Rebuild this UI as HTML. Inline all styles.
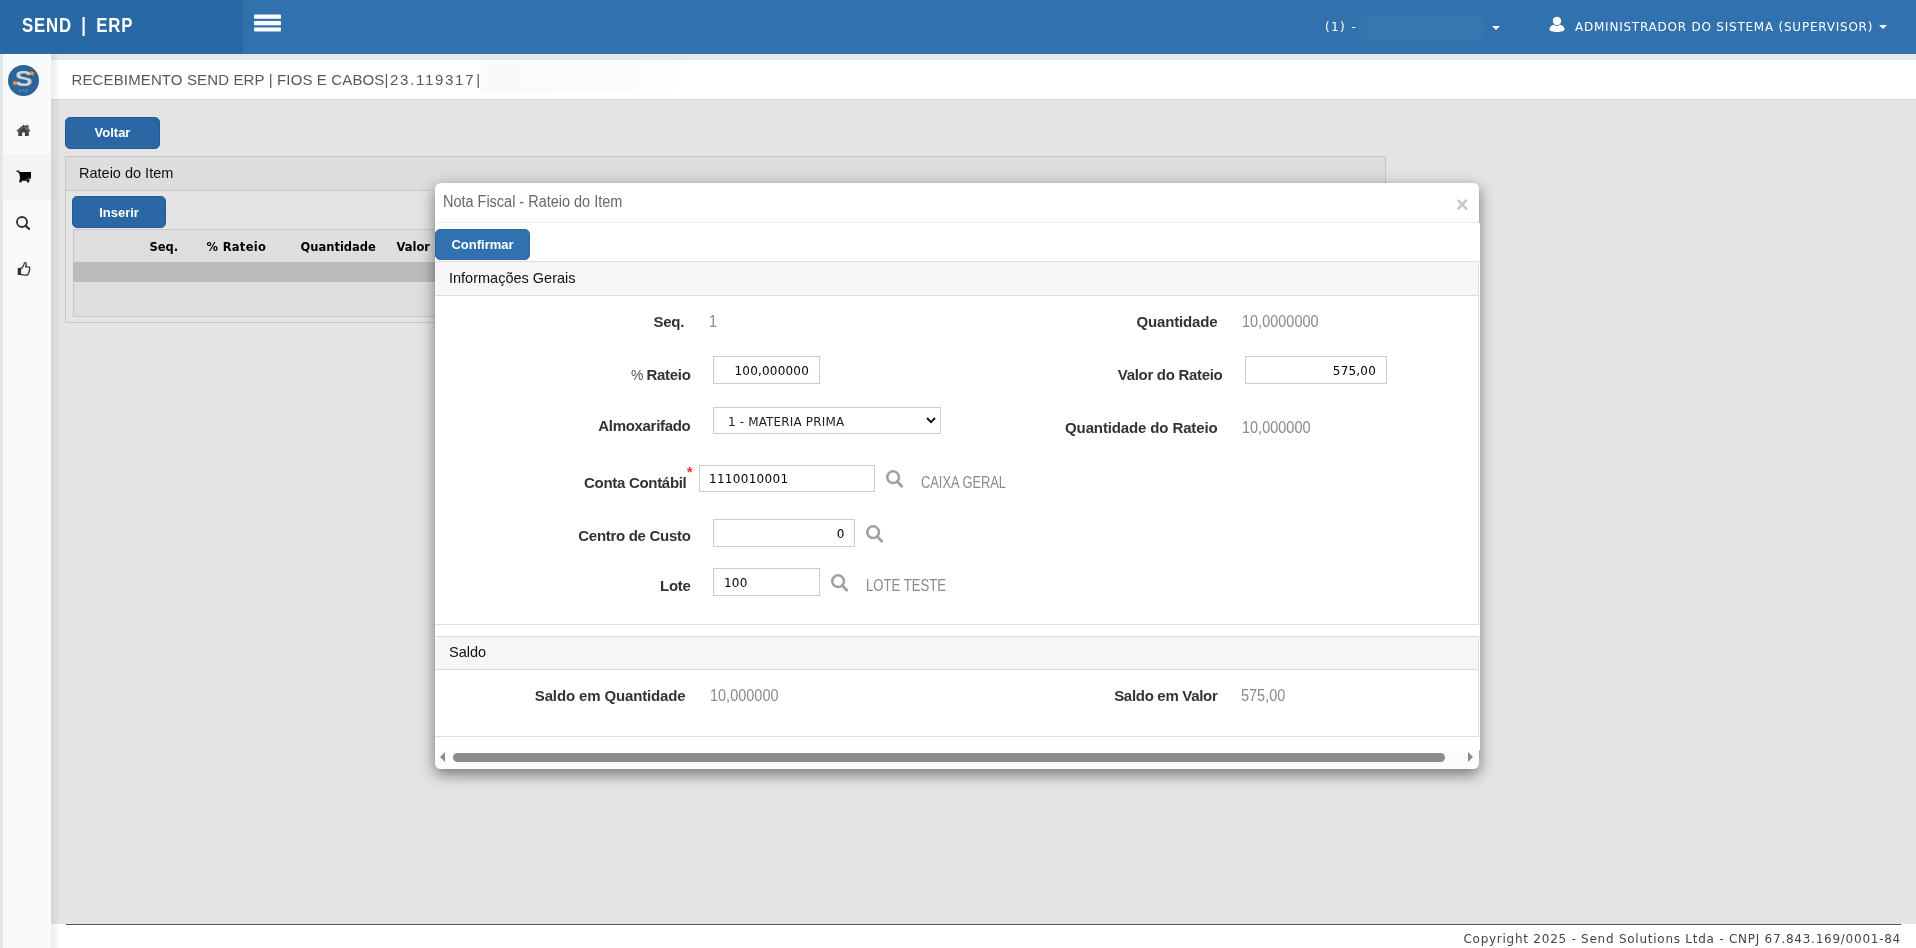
<!DOCTYPE html>
<html lang="pt-BR">
<head>
<meta charset="utf-8">
<title>SEND | ERP</title>
<style>
*{box-sizing:border-box;margin:0;padding:0}
html,body{width:1916px;height:948px;overflow:hidden;background:#fff}
body{position:relative;font-family:"Liberation Sans",Arial,sans-serif;font-size:14.5px;color:#333}
.abs{position:absolute}
.t{position:absolute;white-space:pre;line-height:1}
svg{position:absolute;overflow:visible}
.t,.lbl,.val,.pt,.inp,.th,.btn{filter:grayscale(0)}
/* header */
#hdr{position:absolute;left:0;top:0;width:1916px;height:54px;background:#3071ae}
#logo{position:absolute;left:0;top:0;width:243px;height:54px;background:#2868a5}
#brand{left:22.3px;top:12.5px;font:700 21px "Liberation Sans",Arial,sans-serif;color:#fff;transform:scaleX(.8);transform-origin:0 0;letter-spacing:1px;word-spacing:5px}
.bar{position:absolute;left:254px;width:27px;height:4px;background:#fff;border-radius:1px}
.hd{font:400 12px "DejaVu Sans",Verdana,sans-serif;color:#fff;letter-spacing:.77px}
/* sidebar */
#side{position:absolute;left:0;top:54px;width:51px;height:894px;background:#f9fafc;border-left:3px solid #e6e6e6}
#side .act{position:absolute;left:0;top:100px;width:48px;height:46px;background:#f4f4f4}
#strip{position:absolute;left:51px;top:54px;width:1865px;height:6px;background:#e7e8e9}
#title{position:absolute;left:51px;top:60px;width:1865px;height:40px;background:#fff;border-bottom:1px solid #d8d8d8}
#content{position:absolute;left:51px;top:100px;width:1865px;height:824px;background:#e4e4e4}
#sshadow{position:absolute;left:51px;top:54px;width:9px;height:894px;background:linear-gradient(to right,rgba(0,0,0,.07) 0,rgba(0,0,0,.05) 3px,rgba(0,0,0,0) 9px)}
#footer{position:absolute;left:51px;top:924px;width:1865px;height:24px;background:#fff}
.btn{position:absolute;background:#2a67a4;border:1px solid #245a91;border-radius:5px;color:#fff;font:700 13px "Liberation Sans",Arial,sans-serif;text-align:center;white-space:pre}
.th{position:absolute;white-space:pre;line-height:1;font:700 11.5px "DejaVu Sans",Verdana,sans-serif;color:#000;letter-spacing:0}
.lbl{position:absolute;white-space:pre;line-height:1;font:700 15px "Liberation Sans",Arial,sans-serif;color:#333;text-align:right;letter-spacing:-.3px}
.val{position:absolute;white-space:pre;line-height:1;font:400 15.7px "Liberation Sans",Arial,sans-serif;color:#8a8a8a;transform:scaleX(.924);transform-origin:0 0}
.inp{position:absolute;background:#fff;border:1px solid #ccc;font:400 12px "DejaVu Sans",Verdana,sans-serif;color:#000;white-space:pre;line-height:28.500px;padding:0 10px;letter-spacing:.2px}
.r{text-align:right}
.ph{position:absolute;left:435px;width:1044px;background:#f6f6f6;border:1px solid #ddd;border-left:0}
.pb{position:absolute;left:435px;width:1044px;background:#fff;border:1px solid #ddd;border-top:0;border-left:0}
.pt{position:absolute;white-space:pre;line-height:1;font:400 14.5px "Liberation Sans",Arial,sans-serif;color:#111}
</style>
</head>
<body>
<div id="hdr">
  <div id="logo"></div>
  <div id="brand" class="t">SEND | ERP</div>
  <svg style="left:254px;top:14px" width="27" height="18" viewBox="0 0 27 18"><rect x="0" y=".6" width="27" height="4.100" rx="1" fill="#fff"/><rect x="0" y="7.100" width="27" height="4.100" rx="1" fill="#fff"/><rect x="0" y="13.400" width="27" height="4.100" rx="1" fill="#fff"/></svg>
  <div class="abs" style="left:1360px;top:15px;width:126px;height:26px;background:rgba(255,255,255,.045);border-radius:8px;filter:blur(4px)"></div>
  <div class="t hd" style="left:1325px;top:20px;letter-spacing:1.4px">(1) -</div>
  <div class="abs" style="left:1492px;top:26px;border-left:4px solid transparent;border-right:4px solid transparent;border-top:4px solid #fff"></div>
  <svg style="left:1549px;top:16px" width="16" height="16" viewBox="0 0 16 16"><circle cx="8" cy="5" r="4.2" fill="#fff"/><path d="M0.5 13.5c0-3 2.5-4.5 4.5-4.8c1 .9 2 1.2 3 1.2s2-.3 3-1.2c2 .3 4.500 1.800 4.500 4.800c0 1.500-3 2.500-7.500 2.500s-7.500-1-7.500-2.500z" fill="#fff"/></svg>
  <div class="t hd" style="left:1575px;top:20px">ADMINISTRADOR DO SISTEMA (SUPERVISOR)</div>
  <div class="abs" style="left:1879px;top:25px;border-left:4px solid transparent;border-right:4px solid transparent;border-top:4px solid #fff"></div>
</div>
<div id="side">
  <div class="act"></div>
</div>
<div id="strip"></div>
<div id="title">
  <div class="t" style="left:20.500px;top:11.500px;font-size:15px;letter-spacing:.13px;color:#585858">RECEBIMENTO SEND ERP | FIOS E CABOS|<span style="letter-spacing:1.700px;margin-left:1.600px">23.119317</span><span style="margin-left:1.200px">|</span></div>
  <div class="abs" style="left:430px;top:2px;width:210px;height:31px;background:linear-gradient(to right,#fafafa,#fcfcfc 70%,#fff)"></div>
</div>
<div id="content">
  <div class="btn" style="left:14px;top:17px;width:95px;height:32px;line-height:29px">Voltar</div>
  <div class="abs" style="left:14px;top:56px;width:1321px;height:167px;border:1px solid #c6c6c6">
    <div class="abs" style="left:0;top:0;width:1319px;height:34px;background:#dddddd;border-bottom:1px solid #c6c6c6"></div>
    <div class="pt" style="left:13px;top:8px">Rateio do Item</div>
    <div class="btn" style="left:6px;top:39px;width:94px;height:32px;line-height:31px">Inserir</div>
    <div class="abs" style="left:7px;top:72px;width:1305px;height:33px;background:#dedede;border:1px solid #c8c8c8;border-bottom:0"></div>
    <div class="abs" style="left:7px;top:105px;width:1305px;height:20px;background:#bcbcbc"></div>
    <div class="abs" style="left:7px;top:126px;width:1305px;height:34px;background:#dedede;border:1px solid #c8c8c8;border-top:0"></div>
    <div class="th" style="left:83.500px;top:82.500px">Seq.</div>
    <div class="th" style="left:140.500px;top:82.500px;letter-spacing:.3px">% Rateio</div>
    <div class="th" style="left:234.500px;top:82.500px">Quantidade</div>
    <div class="th" style="left:330.500px;top:82.500px">Valor</div>
  </div>
</div>
<div id="footer">
  <div class="abs" style="left:15px;top:0;width:1835px;height:1px;background:#555"></div>
  <div class="t" style="right:15px;top:8px;font:400 12px 'DejaVu Sans',Verdana,sans-serif;color:#444;letter-spacing:.75px">Copyright 2025 - Send Solutions Ltda - CNPJ 67.843.169/0001-84</div>
</div>
<div id="sshadow"></div>
<!-- sidebar icons -->
<svg style="left:8px;top:65px" width="31" height="31" viewBox="0 0 31 31">
  <circle cx="15.5" cy="15.5" r="15.5" fill="#2b6496"/>
  <text x="15.500" y="21.300" text-anchor="middle" font-family="Liberation Sans,Arial,sans-serif" font-weight="700" font-size="22.500" fill="#cfd1d5" transform="translate(15.500 0) scale(1.180 1) translate(-15.500 0)">S</text>
  <rect x="22" y="6.700" width="4" height="3.500" fill="#f58a3c" transform="rotate(20 24 8.500)"/>
  <rect x="5" y="16.300" width="4" height="3.500" fill="#f58a3c" transform="rotate(20 7 18)"/>
  <text x="15.500" y="27" text-anchor="middle" font-family="Liberation Sans,Arial,sans-serif" font-size="5.500" fill="#6f94b8" letter-spacing=".5">erp</text>
</svg>
<svg id="i-home" style="left:15.500px;top:124.500px" width="15" height="12" viewBox="0 0 16 13"><path d="M8 1.800L2.300 6.600V12h4.200V8.200h3V12h4.200V6.600z" fill="#444"/><path d="M0.800 6.800L8 .8l2.700 2.250V1h2v3.700l2.500 2.100" fill="none" stroke="#444" stroke-width="1.500"/></svg>
<svg id="i-cart" style="left:15.500px;top:170.300px" width="15" height="13.200" viewBox="0 0 16 14"><path d="M0.500 1.200h2.300l.5 1.600H15.300v5.500L4.600 9.600l.3 1h9.600" fill="none" stroke="#000" stroke-width="1.400"/><path d="M3.300 2.800H15.300V8L4.600 9.300z" fill="#000"/><rect x="3.600" y="10.800" width="2.400" height="2.400" fill="#000"/><rect x="11.600" y="10.800" width="2.400" height="2.400" fill="#000"/></svg>
<svg id="i-search" style="left:16px;top:216px" width="15" height="15" viewBox="0 0 15 15"><circle cx="6" cy="6" r="5" fill="none" stroke="#333" stroke-width="1.900"/><path d="M9.600 9.600L13.100 13" stroke="#333" stroke-width="2.200" stroke-linecap="round"/></svg>
<svg id="i-thumb" style="left:16.500px;top:262px" width="14" height="14" viewBox="0 0 14 14"><path d="M3.500 6.200h1.500L7 2.200c.2-1 .4-1.500 1-1.500c.8 0 1.200 .8 1.200 1.800c0 .9-.4 1.700-.6 2.400h3c.8 0 1.300 .6 1.300 1.300c0 .5-.2 .9-.5 1.100c.2 .3 .3 .6 .2 1c-.1 .4-.3 .7-.6 .9c.1 .3 .1 .7 0 1c-.2 .4-.4 .6-.7 .8c.1 1.200-.5 2.100-1.800 2.100H7c-1.200 0-2-.6-3.500-.8z" fill="none" stroke="#333" stroke-width="1.300" stroke-linejoin="round"/><rect x="0.700" y="6" width="3" height="7" fill="#333"/></svg>

<!-- modal -->
<div id="modal" class="abs" style="left:435px;top:183px;width:1044px;height:586px;background:#fff;border-radius:6px;box-shadow:0 5px 15px rgba(0,0,0,.5)"></div>
<div class="abs" style="left:435px;top:222px;width:1044px;height:1px;background:#ececec"></div>
<div class="t" style="left:443px;top:194.3px;font-size:16px;color:#686868;transform:scaleX(.904);transform-origin:0 0">Nota Fiscal - Rateio do Item</div>
<div class="t" style="left:1455.700px;top:192.300px;font:700 22px 'Liberation Sans',Arial,sans-serif;color:#c6c6c6">×</div>
<div class="btn" style="left:435px;top:229px;width:95px;height:31px;line-height:29px;background:#3071ae;border-color:#2c69a3">Confirmar</div>

<div class="ph" style="top:261px;height:35px"></div>
<div class="pb" style="top:296px;height:329px"></div>
<div class="pt" style="left:449px;top:269.500px">Informações Gerais</div>

<div class="lbl" style="right:1232px;top:313px">Seq.</div>
<div class="val" style="left:709px;top:313px">1</div>
<div class="lbl" style="right:1225.5px;top:366px"><span style="font-weight:400;font-size:14px;color:#555;letter-spacing:-.8px">%</span> Rateio</div>
<div class="inp r" style="left:713px;top:356px;width:107px;height:28px">100,000000</div>
<div class="lbl" style="right:1225.5px;top:417px">Almoxarifado</div>
<div class="inp" style="left:713px;top:407px;width:228px;height:27px;line-height:29px;padding-left:14px;letter-spacing:.15px;color:#222">1 - MATERIA PRIMA</div>
<svg style="left:926px;top:417px" width="10" height="7" viewBox="0 0 10 7"><path d="M1 1l4 4.200L9 1" fill="none" stroke="#111" stroke-width="1.900"/></svg>
<div class="lbl" style="right:1229.5px;top:474px">Conta Contábil</div>
<div class="t" style="left:687px;top:463.500px;font:700 14px 'Liberation Sans',Arial,sans-serif;color:#f22">*</div>
<div class="inp" style="left:699px;top:465px;width:176px;height:27px;line-height:27px;padding-left:9px;letter-spacing:.3px">1110010001</div>
<svg class="mag" style="left:886px;top:470px" width="18" height="18" viewBox="0 0 18 18"><circle cx="7.100" cy="7.200" r="5.850" fill="none" stroke="#a39fa4" stroke-width="2.500"/><path d="M11.500 11.800L15.800 16.300" stroke="#a39fa4" stroke-width="2.700" stroke-linecap="round"/></svg>
<div class="val" style="left:921px;top:474px;transform:scaleX(.819)">CAIXA GERAL</div>
<div class="lbl" style="right:1225.5px;top:527px">Centro de Custo</div>
<div class="inp r" style="left:713px;top:519px;width:142px;height:28px;padding-right:9.3px">0</div>
<svg class="mag" style="left:866px;top:525px" width="18" height="18" viewBox="0 0 18 18"><circle cx="7.100" cy="7.200" r="5.850" fill="none" stroke="#a39fa4" stroke-width="2.500"/><path d="M11.500 11.800L15.800 16.300" stroke="#a39fa4" stroke-width="2.700" stroke-linecap="round"/></svg>
<div class="lbl" style="right:1225.5px;top:577px">Lote</div>
<div class="inp" style="left:713px;top:568px;width:107px;height:28px">100</div>
<svg class="mag" style="left:831px;top:574px" width="18" height="18" viewBox="0 0 18 18"><circle cx="7.100" cy="7.200" r="5.850" fill="none" stroke="#a39fa4" stroke-width="2.500"/><path d="M11.500 11.800L15.800 16.300" stroke="#a39fa4" stroke-width="2.700" stroke-linecap="round"/></svg>
<div class="val" style="left:866px;top:577px;transform:scaleX(.837)">LOTE TESTE</div>

<div class="lbl" style="right:698.5px;top:313px;letter-spacing:-.15px">Quantidade</div>
<div class="val" style="left:1241.500px;top:313px">10,0000000</div>
<div class="lbl" style="right:693.5px;top:366px">Valor do Rateio</div>
<div class="inp r" style="left:1245px;top:356px;width:142px;height:28px">575,00</div>
<div class="lbl" style="right:698.5px;top:419px;letter-spacing:-.13px">Quantidade do Rateio</div>
<div class="val" style="left:1241.500px;top:419px">10,000000</div>

<div class="ph" style="top:636px;height:34px"></div>
<div class="pb" style="top:670px;height:67px"></div>
<div class="pt" style="left:449px;top:644px">Saldo</div>
<div class="lbl" style="right:1230.5px;top:687px;letter-spacing:-.14px">Saldo em Quantidade</div>
<div class="val" style="left:709.500px;top:687px">10,000000</div>
<div class="lbl" style="right:698.5px;top:687px">Saldo em Valor</div>
<div class="val" style="left:1240.500px;top:687px">575,00</div>

<div class="abs" style="left:1479px;top:223px;width:1px;height:527px;background:#fff"></div>
<!-- scrollbar -->
<div class="abs" style="left:435px;top:750px;width:1044px;height:19px;background:#fcfcfc;border-radius:0 0 6px 6px"></div>
<div class="abs" style="left:440px;top:752px;border-top:5px solid transparent;border-bottom:5px solid transparent;border-right:5px solid #8b8b8b"></div>
<div class="abs" style="left:453px;top:753px;width:992px;height:9px;border-radius:5px;background:#8b8b8b"></div>
<div class="abs" style="left:1468px;top:752px;border-top:5px solid transparent;border-bottom:5px solid transparent;border-left:5px solid #8b8b8b"></div>
</body>
</html>
